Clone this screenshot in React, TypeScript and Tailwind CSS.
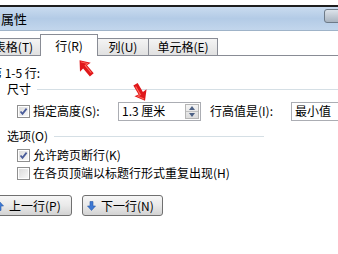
import React from 'react'

const FONT = { fontFamily: '"Noto Sans CJK SC", "Liberation Sans", sans-serif' }

function CheckBox({ checked }: { checked?: boolean }) {
  return (
    <span className="flex h-[13px] w-[13px] shrink-0 items-center justify-center border border-[#8f8f8f] bg-white">
      <span className="flex h-[9px] w-[9px] items-center justify-center bg-gradient-to-br from-[#dcdcdc] to-[#f8f8f8]">
        {checked && (
          <svg width="9" height="9" viewBox="0 0 9 9">
            <path d="M1.5 4.5 L3.5 6.8 L7.6 1.6" fill="none" stroke="#4a5c9a" strokeWidth="1.8" />
          </svg>
        )}
      </span>
    </span>
  )
}

function Tab({ label, selected, className = '' }: { label: string; selected?: boolean; className?: string }) {
  return (
    <div
      className={`flex items-center justify-center whitespace-nowrap border border-[#898c95] text-[12px] text-black ${
        selected
          ? 'z-10 -mx-[1px] h-[22px] border-b-0 bg-white'
          : 'h-[18px] bg-gradient-to-b from-[#f4f4f4] to-[#e1e1e1]'
      } ${className}`}
    >
      {label}
    </div>
  )
}

function Arrow({ className, rotate }: { className: string; rotate: number }) {
  return (
    <svg className={`absolute ${className}`} width="20" height="22" viewBox="0 0 20 22">
      <g transform={`rotate(${rotate} 10 11)`}>
        <path d="M10 1 L17 10 L12.5 9.5 L12.5 20 L7.5 20 L7.5 9.5 L3 10 Z" fill="#e0171a" />
        <path d="M10 3 L14 8.5 L11 8.5 L11 18" fill="none" stroke="#ff6a5c" strokeWidth="1" />
      </g>
    </svg>
  )
}

function WinButton({ label, up, className = '' }: { label: string; up?: boolean; className?: string }) {
  return (
    <div
      className={`flex h-[21px] items-center gap-[5px] whitespace-nowrap rounded-[3px] border border-[#707070] bg-gradient-to-b from-[#f6f6f6] via-[#e9e9e9] to-[#d3d3d3] pl-[4px] text-[12px] text-black ${className}`}
    >
      <svg width="9" height="10" viewBox="0 0 9 10">
        <g transform={up ? '' : 'rotate(180 4.5 5)'}>
          <path d="M4.5 0.5 L8.5 5 L6 5 L6 9.5 L3 9.5 L3 5 L0.5 5 Z" fill="#3d78d4" stroke="#2a5aa8" strokeWidth="0.6" />
        </g>
      </svg>
      <span>{label}</span>
    </div>
  )
}

export default function App() {
  return (
    <div className="relative h-[254px] w-[338px] overflow-hidden bg-white" style={FONT}>
      <div className="h-[5px] bg-white" />
      <div className="h-[2px] bg-[#1e1e1e]" />
      <div className="flex h-[23px] items-center justify-between bg-gradient-to-b from-[#c9dbef] via-[#b3cbe6] to-[#c2d6ec]">
        <span className="pl-[1px] text-[13px] text-black">属性</span>
        <div className="mr-[-4px] mt-[-5px] h-[14px] w-[18px] rounded-[3px] border border-[#6d7a88] bg-gradient-to-b from-[#dde3ea] to-[#a9b4c0]" />
      </div>
      <div className="h-[1px] bg-[#9fb3c8]" />

      <div className="mt-[3px] flex items-end">
        <Tab label="表格(T)" className="ml-[-14px] w-[55px]" />
        <Tab label="行(R)" selected className="w-[58px]" />
        <Tab label="列(U)" className="w-[52px]" />
        <Tab label="单元格(E)" className="ml-[-1px] w-[70px]" />
        <div className="h-[1px] flex-1 bg-[#898c95]" />
      </div>

      <div className="pt-[10px] text-[12px] leading-[14px] text-black">
        <div className="ml-[-10px] flex h-[14px] items-center whitespace-nowrap">第 1-5 行:</div>

        <div className="mt-[2px] flex h-[14px] items-center gap-[6px] pl-[7px]">
          <span>尺寸</span>
          <div className="h-[1px] flex-1 bg-[#d5dfe5]" />
        </div>

        <div className="mt-[5px] flex h-[20px] items-center whitespace-nowrap pl-[17px]">
          <CheckBox checked />
          <span className="ml-[3px] w-[85px]">指定高度(S):</span>
          <div className="flex h-[19px] w-[83px] shrink-0 items-center justify-between border border-[#abadb3] pl-[3px]">
            <span>1.3 厘米</span>
            <div className="mr-[1px] flex h-[15px] w-[14px] flex-col border border-[#b5b5b5] bg-gradient-to-b from-[#f4f4f4] to-[#dcdcdc]">
              <div className="flex flex-1 items-center justify-center border-b border-[#c0c0c0]">
                <svg width="6" height="4" viewBox="0 0 6 4"><path d="M0 4 L3 0 L6 4 Z" fill="#4d6185" /></svg>
              </div>
              <div className="flex flex-1 items-center justify-center">
                <svg width="6" height="4" viewBox="0 0 6 4"><path d="M0 0 L3 4 L6 0 Z" fill="#4d6185" /></svg>
              </div>
            </div>
          </div>
          <span className="ml-[9px] w-[81px] shrink-0">行高值是(I):</span>
          <div className="mr-[-10px] flex h-[19px] flex-1 items-center border border-[#abadb3] pl-[3px]">最小值</div>
        </div>

        <div className="mt-[8px] flex h-[14px] items-center gap-[6px] pl-[7px]">
          <span>选项(O)</span>
          <div className="h-[1px] w-[210px] bg-[#d5dfe5]" />
        </div>

        <div className="mt-[4px] flex h-[16px] items-center whitespace-nowrap pl-[17px]">
          <CheckBox checked />
          <span className="ml-[3px]">允许跨页断行(K)</span>
        </div>
        <div className="mt-[2px] flex h-[16px] items-center whitespace-nowrap pl-[17px]">
          <CheckBox />
          <span className="ml-[3px]">在各页顶端以标题行形式重复出现(H)</span>
        </div>

        <div className="mt-[14px] flex items-center gap-[10px]">
          <WinButton label="上一行(P)" up className="ml-[-10px] w-[82px]" />
          <WinButton label="下一行(N)" className="w-[81px]" />
        </div>
      </div>

      <Arrow className="left-[76px] top-[57px]" rotate={-40} />
      <Arrow className="left-[130px] top-[81px]" rotate={150} />
    </div>
  )
}
